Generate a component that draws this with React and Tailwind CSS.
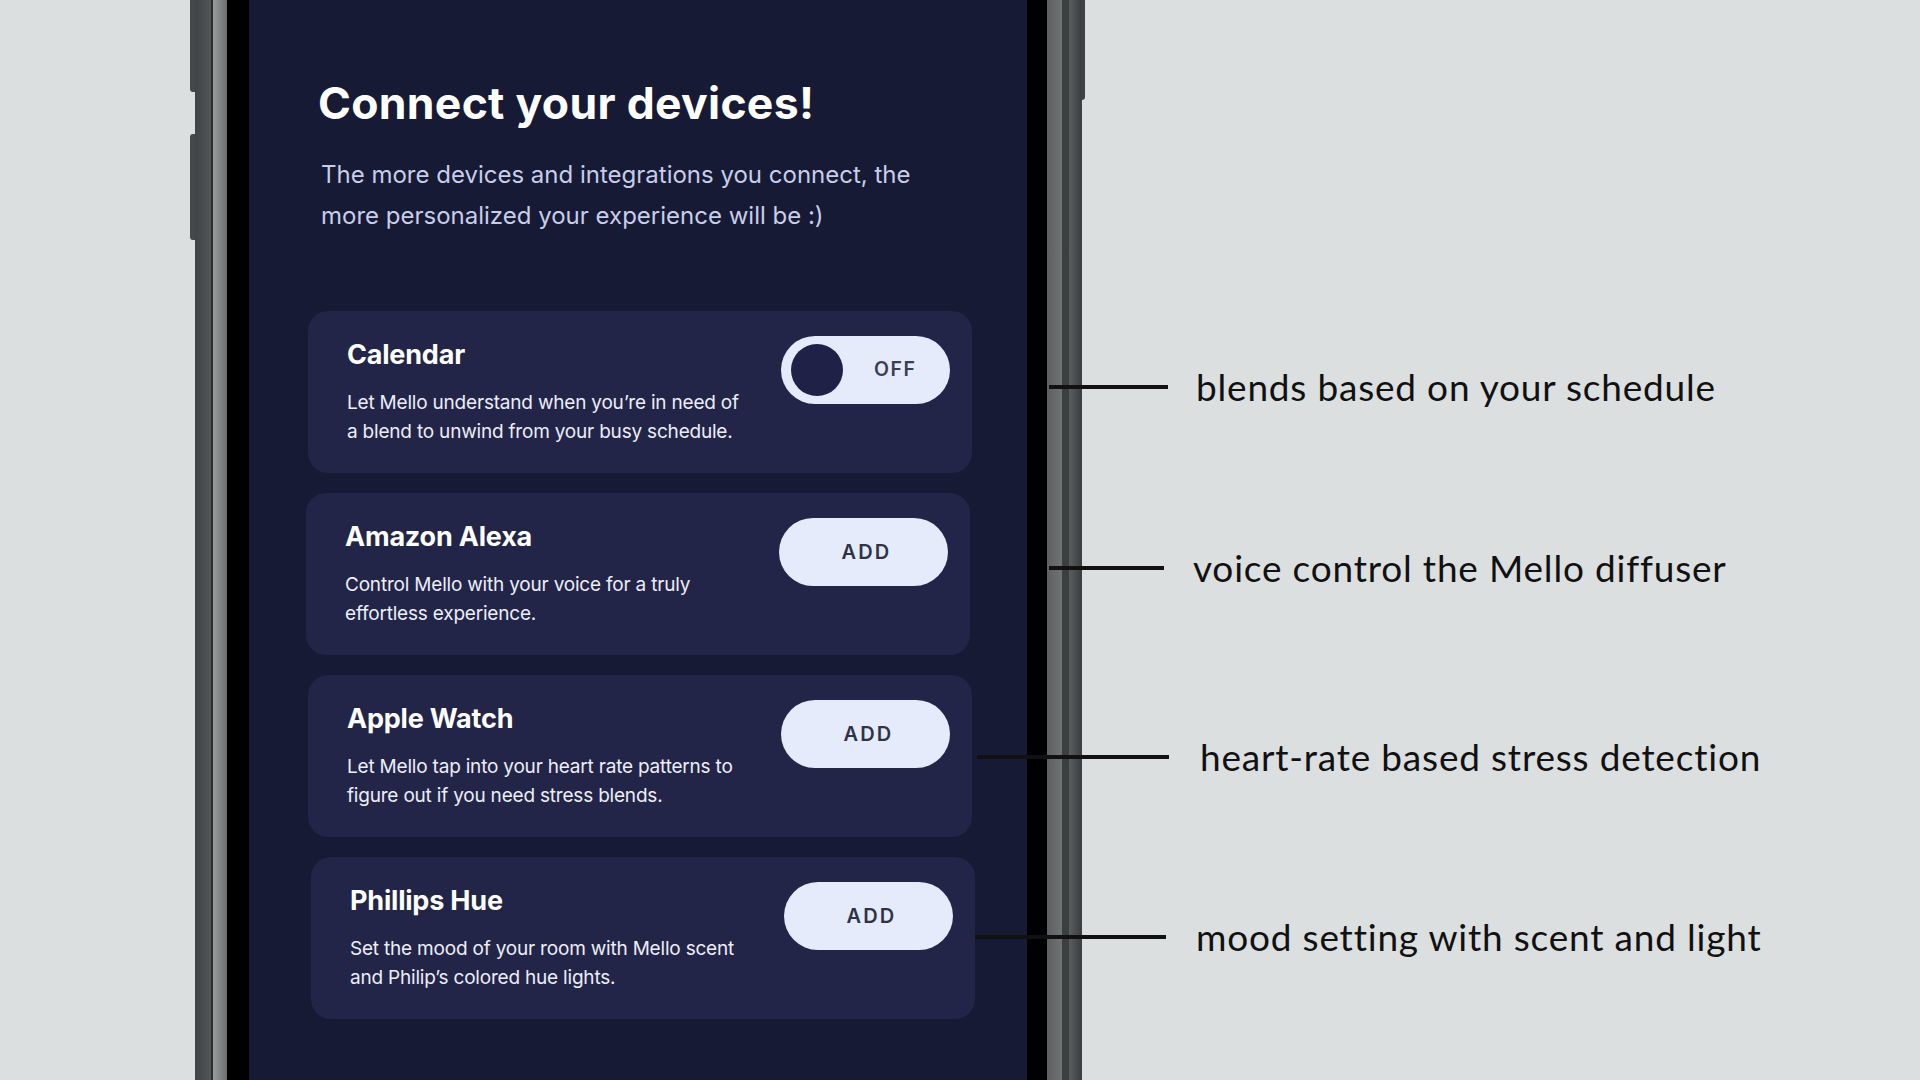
import React from 'react';

// Mello onboarding screen shown inside a phone frame, with annotations on the right.

const devices = [
  {
    name: 'Calendar',
    lines: ['Let Mello understand when you’re in need of', 'a blend to unwind from your busy schedule.'],
    toggle: true,
    shift: 'ml-0',
  },
  {
    name: 'Amazon Alexa',
    lines: ['Control Mello with your voice for a truly', 'effortless experience.'],
    shift: '-ml-[2px]',
  },
  {
    name: 'Apple Watch',
    lines: ['Let Mello tap into your heart rate patterns to', 'figure out if you need stress blends.'],
    shift: 'ml-0',
  },
  {
    name: 'Phillips Hue',
    lines: ['Set the mood of your room with Mello scent', 'and Philip’s colored hue lights.'],
    shift: 'ml-[3px]',
  },
];

const notes = [
  { text: 'blends based on your schedule', line: 'ml-[74px] w-[119px]', gap: 'ml-[28px]', top: 'mt-[365px]' },
  { text: 'voice control the Mello diffuser', line: 'ml-[74px] w-[115px]', gap: 'ml-[29px]', top: 'mt-[137px]' },
  { text: 'heart-rate based stress detection', line: 'ml-[2px] w-[192px]', gap: 'ml-[31px]', top: 'mt-[145px]' },
  { text: 'mood setting with scent and light', line: 'ml-0 w-[191px]', gap: 'ml-[30px]', top: 'mt-[136px]' },
];

function OffToggle() {
  return (
    <div className="mt-[25px] mr-[22px] flex h-[68px] w-[169px] shrink-0 items-center rounded-full bg-[#e6ebfb] pl-[10px]">
      <div className="h-[52px] w-[52px] rounded-full bg-[#1f2146]" />
      <span className="ml-[31px] text-[19.5px] font-semibold tracking-[1.5px] text-[#3a3e50]">OFF</span>
    </div>
  );
}

function AddButton() {
  return (
    <div className="mt-[25px] mr-[22px] flex h-[68px] w-[169px] shrink-0 items-center justify-center rounded-full bg-[#e6ebfb] pl-[6px]">
      <span className="text-[20px] font-semibold tracking-[2.2px] text-[#2f3346]">ADD</span>
    </div>
  );
}

function DeviceCard({ device }) {
  return (
    <div className={`flex h-[162px] w-[664px] justify-between rounded-[20px] bg-[#232548] ${device.shift}`}>
      <div className="pl-[39px] pt-[28px]">
        <div className="text-[27px] leading-[32px] font-bold tracking-[-0.2px] text-white">{device.name}</div>
        <div className="mt-[17px] text-[19px] leading-[29px] tracking-[-0.2px] text-[#eceef8]">
          {device.lines.map(l => (
            <div key={l}>{l}</div>
          ))}
        </div>
      </div>
      {device.toggle ? <OffToggle /> : <AddButton />}
    </div>
  );
}

export default function App() {
  return (
    <div className="flex h-[1080px] w-[1920px] overflow-hidden bg-[#dcdfe0] pl-[190px] font-['Inter',sans-serif]">
      {/* left side buttons */}
      <div className="flex w-[5px] flex-col">
        <div className="h-[92px] rounded-bl-[3px] bg-[#44484a]" />
        <div className="mt-[42px] h-[106px] rounded-l-[3px] bg-[#44484a]" />
      </div>

      {/* left frame */}
      <div className="flex w-[32px]">
        <div className="w-[16px] bg-gradient-to-r from-[#3f4345] to-[#53575a]" />
        <div className="w-[2px] bg-[#2b2e30]" />
        <div className="w-[14px] bg-gradient-to-r from-[#9b9c9d] to-[#6c6e70]" />
      </div>
      <div className="w-[22px] bg-black" />

      {/* screen */}
      <div className="flex w-[778px] flex-col bg-[#161a34] pl-[59px]">
        <h1 className="mt-[77px] pl-[10px] text-[44.5px] leading-[52px] font-bold tracking-[0.3px] text-white">
          Connect your devices!
        </h1>
        <p className="mt-[25px] pl-[13px] text-[24px] leading-[41px] tracking-[0px] text-[#c8cdea]">
          The more devices and integrations you connect, the
          <br />
          more personalized your experience will be :)
        </p>
        <div className="mt-[75px] flex flex-col gap-[20px]">
          {devices.map(d => (
            <DeviceCard key={d.name} device={d} />
          ))}
        </div>
      </div>

      {/* right frame */}
      <div className="w-[20px] bg-black" />
      <div className="flex w-[35px]">
        <div className="w-[15px] bg-gradient-to-r from-[#5d5f61] to-[#707274]" />
        <div className="w-[7px] bg-[#3c3f40]" />
        <div className="w-[13px] bg-gradient-to-r from-[#5b5d5f] to-[#3a3d3f]" />
      </div>
      <div className="flex w-[3px] flex-col">
        <div className="h-[100px] rounded-br-[3px] bg-[#3f4345]" />
      </div>

      {/* annotations */}
      <div className="relative z-10 -ml-[110px] flex flex-col font-['Lato',sans-serif]">
        {notes.map(n => (
          <div key={n.text} className={`flex h-[44px] items-center ${n.top}`}>
            <div className={`h-[4px] bg-[#111111] ${n.line}`} />
            <span className={`${n.gap} whitespace-nowrap text-[37px] leading-[44px] tracking-[0.8px] text-[#111111]`}>
              {n.text}
            </span>
          </div>
        ))}
      </div>
    </div>
  );
}
